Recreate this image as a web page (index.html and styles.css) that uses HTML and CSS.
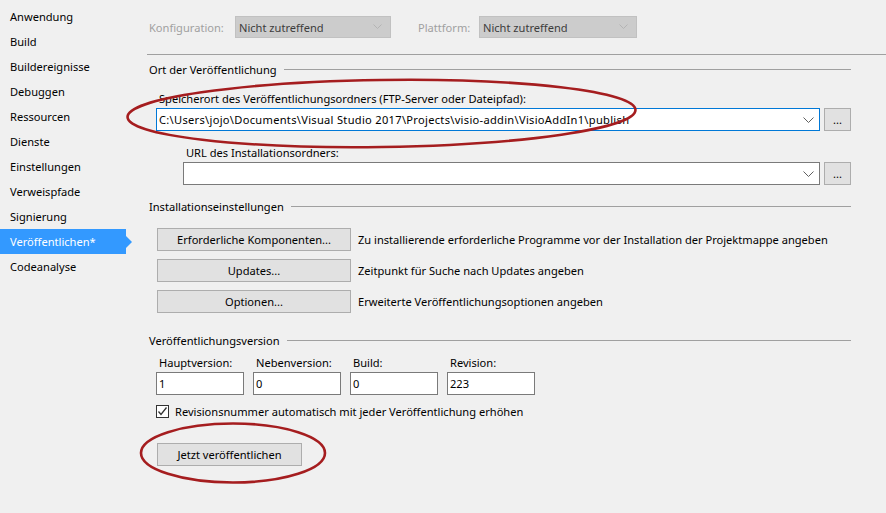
FILE: index.html
```html
<!DOCTYPE html>
<html lang="de">
<head>
<meta charset="utf-8">
<title>Veröffentlichen</title>
<link rel="stylesheet" href="styles.css">
</head>
<body>
<div class="app">
  <nav class="sidebar">
    <div class="nav-item">Anwendung</div>
    <div class="nav-item">Build</div>
    <div class="nav-item">Buildereignisse</div>
    <div class="nav-item">Debuggen</div>
    <div class="nav-item">Ressourcen</div>
    <div class="nav-item">Dienste</div>
    <div class="nav-item">Einstellungen</div>
    <div class="nav-item">Verweispfade</div>
    <div class="nav-item">Signierung</div>
    <div class="nav-item active">Veröffentlichen*</div>
    <div class="nav-item">Codeanalyse</div>
  </nav>
  <main class="main">
    <div class="toprow">
      <span class="dis-label">Konfiguration:</span>
      <div class="dis-select sel-konf"><span>Nicht zutreffend</span><svg class="chev" width="9" height="5" viewBox="0 0 9 5"><polyline points="0.5,0.5 4.5,4.5 8.5,0.5" fill="none" stroke="#b4b4b4" stroke-width="1"/></svg></div>
      <span class="dis-label plat">Plattform:</span>
      <div class="dis-select sel-plat"><span>Nicht zutreffend</span><svg class="chev" width="9" height="5" viewBox="0 0 9 5"><polyline points="0.5,0.5 4.5,4.5 8.5,0.5" fill="none" stroke="#b4b4b4" stroke-width="1"/></svg></div>
    </div>
    <div class="hr"></div>

    <section class="group">
      <div class="group-head g1"><span>Ort der Veröffentlichung</span><i></i></div>
      <div class="field-label lbl-speicher">Speicherort des Veröffentlichungsordners (FTP-Server oder Dateipfad):</div>
      <div class="combo-row">
        <div class="combo focused wide"><span class="path">C:\Users\jojo\Documents\Visual Studio 2017\Projects\visio-addin\VisioAddIn1\publish</span><svg class="chev" width="11" height="6" viewBox="0 0 11 6"><polyline points="0.5,0.5 5.5,5.5 10.5,0.5" fill="none" stroke="#606060" stroke-width="1"/></svg></div>
        <button class="btn dots">...</button>
      </div>
      <div class="field-label lbl-url">URL des Installationsordners:</div>
      <div class="combo-row indent">
        <div class="combo narrow"><span></span><svg class="chev" width="11" height="6" viewBox="0 0 11 6"><polyline points="0.5,0.5 5.5,5.5 10.5,0.5" fill="none" stroke="#606060" stroke-width="1"/></svg></div>
        <button class="btn dots">...</button>
      </div>
    </section>

    <section class="group">
      <div class="group-head g2"><span>Installationseinstellungen</span><i></i></div>
      <div class="btn-list">
        <div class="btn-row"><button class="btn wbtn">Erforderliche Komponenten...</button><span>Zu installierende erforderliche Programme vor der Installation der Projektmappe angeben</span></div>
        <div class="btn-row"><button class="btn wbtn">Updates...</button><span>Zeitpunkt für Suche nach Updates angeben</span></div>
        <div class="btn-row"><button class="btn wbtn">Optionen...</button><span>Erweiterte Veröffentlichungsoptionen angeben</span></div>
      </div>
    </section>

    <section class="group">
      <div class="group-head g3"><span>Veröffentlichungsversion</span><i></i></div>
      <div class="versions">
        <div class="ver"><label>Hauptversion:</label><div class="tbox">1</div></div>
        <div class="ver"><label>Nebenversion:</label><div class="tbox">0</div></div>
        <div class="ver"><label>Build:</label><div class="tbox">0</div></div>
        <div class="ver"><label>Revision:</label><div class="tbox">223</div></div>
      </div>
      <div class="check-row">
        <span class="checkbox"><svg width="11" height="11" viewBox="0 0 11 11"><polyline points="1.5,5.5 4,8.5 9.5,1.5" fill="none" stroke="#333" stroke-width="1.3"/></svg></span>
        <span>Revisionsnummer automatisch mit jeder Veröffentlichung erhöhen</span>
      </div>
      <button class="btn publish">Jetzt veröffentlichen</button>
    </section>
  </main>
</div>
<svg class="marks" width="886" height="513" viewBox="0 0 886 513">
  <ellipse cx="381.5" cy="113.5" rx="254" ry="33.5" transform="rotate(-0.8 381.5 113.5)" fill="none" stroke="#a51d1f" stroke-width="2.6"/>
  <ellipse cx="233" cy="453" rx="92" ry="29.5" fill="none" stroke="#a51d1f" stroke-width="2.6"/>
</svg>
</body>
</html>
```
FILE: styles.css
```css
* { box-sizing: border-box; }
html, body {
  margin: 0;
  padding: 0;
  background: #f0f0f0;
  width: 886px;
  height: 513px;
  overflow: hidden;
}
body {
  font-family: "Noto Sans", "Open Sans", sans-serif;
  font-size: 11.1px;
  color: #000;
  position: relative;
}
.app {
  display: flex;
  height: 513px;
}
.sidebar {
  width: 131px;
  flex: none;
  padding-top: 4px;
}
.nav-item {
  height: 25px;
  line-height: 25px;
  padding-left: 10px;
  white-space: nowrap;
  position: relative;
  width: 126px;
}
.nav-item.active {
  background: #3399ff;
  color: #fff;
}
.nav-item.active::after {
  content: "";
  position: absolute;
  right: -6px;
  top: 7px;
  border-top: 6px solid transparent;
  border-bottom: 6px solid transparent;
  border-left: 6px solid #3399ff;
}
.main {
  flex: 1;
  padding-left: 16px;
  padding-top: 16px;
}
.toprow {
  display: flex;
  align-items: center;
  height: 22px;
}
.dis-label {
  color: #a0a0a0;
  padding-left: 2px;
  width: 88px;
}
.dis-label.plat { width: 63px; margin-left: 25px; }
.dis-select {
  height: 22px;
  background: #cccccc;
  border: 1px solid #c1c1c1;
  display: flex;
  align-items: center;
  padding-left: 3px;
  color: #3c3c3c;
  position: relative;
}
.sel-konf { width: 156px; }
.sel-plat { width: 158px; }
.chev {
  position: absolute;
  right: 8px;
  top: 50%;
  margin-top: -3px;
}
.hr {
  height: 1px;
  background: #a0a0a0;
  margin-top: 16px;
  margin-right: 0;
}
.group {
  width: 704px;
}
.group-head {
  display: flex;
  align-items: center;
  height: 16px;
  line-height: 16px;
  padding-left: 2px;
}
.group-head i {
  flex: 1;
  height: 1px;
  background: #a0a0a0;
  margin-left: 7px;
  margin-top: -1px;
}
.g1 { margin-top: 7px; }
.g2 { margin-top: 14px; }
.g3 { margin-top: 20px; }
.field-label {
  height: 16px;
  line-height: 16px;
}
.lbl-speicher { margin-top: 13px; padding-left: 12px; }
.lbl-url { margin-top: 14px; padding-left: 39px; }
.combo-row {
  display: flex;
  margin-top: 1px;
  padding-left: 9px;
  gap: 4px;
}
.combo-row.indent { padding-left: 36px; }
.combo {
  flex: 1;
  height: 23px;
  background: #fff;
  border: 1px solid #7a7a7a;
  position: relative;
  display: flex;
  align-items: center;
  padding-left: 2px;
  white-space: nowrap;
}
.combo.focused { border-color: #0078d7; }
.combo .chev { right: 5px; }
.path { letter-spacing: 0.3px; }
.btn {
  font: inherit;
  color: #000;
  background: #e1e1e1;
  border: 1px solid #adadad;
  height: 23px;
  padding: 0;
  margin: 0;
}
.btn.dots { width: 27px; flex: none; }
.btn-list {
  margin-top: 13px;
  padding-left: 10px;
  display: flex;
  flex-direction: column;
  gap: 8px;
}
.btn-row {
  display: flex;
  align-items: center;
  gap: 7px;
  white-space: nowrap;
}
.wbtn { width: 194px; flex: none; }
.versions {
  display: flex;
  gap: 9px;
  margin-top: 6px;
  padding-left: 9px;
}
.ver {
  display: flex;
  flex-direction: column;
  width: 88px;
}
.ver label {
  height: 16px;
  line-height: 16px;
  padding-left: 3px;
}
.tbox {
  margin-top: 1px;
  height: 23px;
  background: #fff;
  border: 1px solid #7a7a7a;
  padding-left: 2px;
  line-height: 21px;
}
.check-row {
  display: flex;
  align-items: center;
  margin-top: 8px;
  padding-left: 9px;
  height: 16px;
  gap: 6px;
}
.checkbox {
  width: 13px;
  height: 13px;
  border: 1px solid #333;
  background: #fff;
  display: flex;
  align-items: center;
  justify-content: center;
}
.publish {
  margin-top: 24px;
  margin-left: 10px;
  width: 145px;
  display: block;
}
.marks {
  position: absolute;
  left: 0;
  top: 0;
  pointer-events: none;
}
```
